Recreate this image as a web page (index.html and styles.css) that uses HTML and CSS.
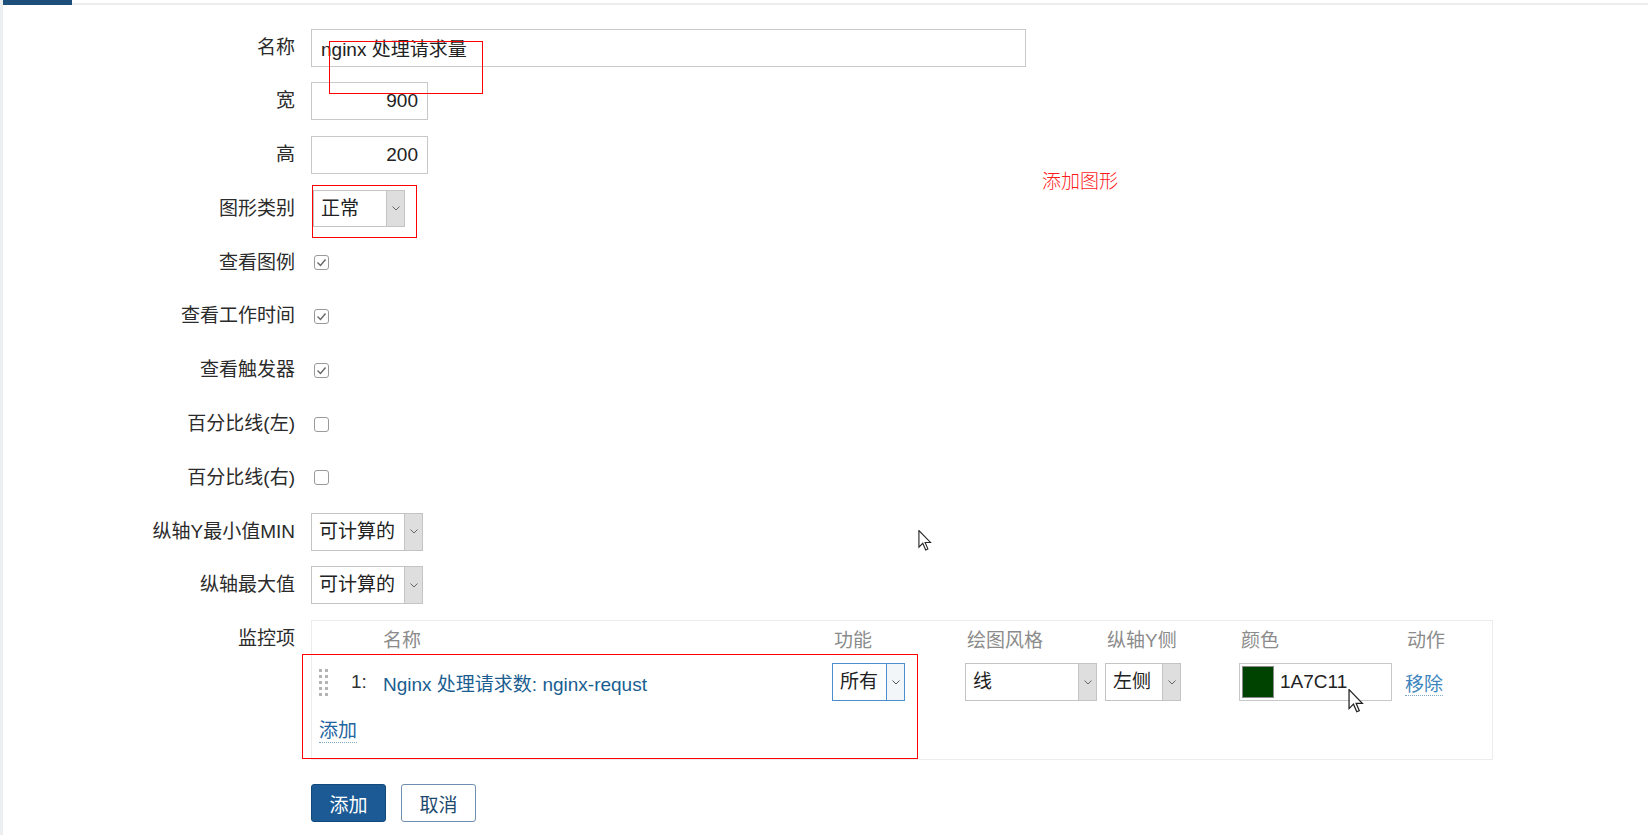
FILE: index.html
```html
<!DOCTYPE html>
<html>

	<head>
		<meta charset="utf-8">
		<title>图形</title>
		<link rel="stylesheet" href="styles.css">
	</head>

	<body>
		<div class="page">
			<div class="tabs">
				<div class="tab-on"></div>
				<div class="tab-line"></div>
			</div>

			<form class="graph-form">
				<label class="lbl">名称</label>
				<div class="fld"><input class="txt txt-name" type="text" value="nginx 处理请求量" /></div>

				<label class="lbl">宽</label>
				<div class="fld"><input class="txt txt-num" type="text" value="900" /></div>

				<label class="lbl">高</label>
				<div class="fld"><input class="txt txt-num" type="text" value="200" /></div>

				<label class="lbl">图形类别</label>
				<div class="fld">
					<div class="sel sel-type"><span class="sel-text">正常</span><span class="sel-btn"><svg width="8" height="5"><polyline points="0.5,0.5 4,4 7.5,0.5" fill="none" stroke="#666" /></svg></span></div>
				</div>

				<label class="lbl">查看图例</label>
				<div class="fld"><span class="chk"><svg width="15" height="15"><rect x="0.5" y="0.5" width="14" height="14" rx="2.5" fill="#fff" stroke="#9a9a9a" /><polyline points="3.5,7.5 6.5,10.5 11.5,4.5" fill="none" stroke="#666" stroke-width="1.4" /></svg></span></div>

				<label class="lbl">查看工作时间</label>
				<div class="fld"><span class="chk"><svg width="15" height="15"><rect x="0.5" y="0.5" width="14" height="14" rx="2.5" fill="#fff" stroke="#9a9a9a" /><polyline points="3.5,7.5 6.5,10.5 11.5,4.5" fill="none" stroke="#666" stroke-width="1.4" /></svg></span></div>

				<label class="lbl">查看触发器</label>
				<div class="fld"><span class="chk"><svg width="15" height="15"><rect x="0.5" y="0.5" width="14" height="14" rx="2.5" fill="#fff" stroke="#9a9a9a" /><polyline points="3.5,7.5 6.5,10.5 11.5,4.5" fill="none" stroke="#666" stroke-width="1.4" /></svg></span></div>

				<label class="lbl">百分比线(左)</label>
				<div class="fld"><span class="chk"><svg width="15" height="15"><rect x="0.5" y="0.5" width="14" height="14" rx="2.5" fill="#fff" stroke="#9a9a9a" /></svg></span></div>

				<label class="lbl">百分比线(右)</label>
				<div class="fld"><span class="chk"><svg width="15" height="15"><rect x="0.5" y="0.5" width="14" height="14" rx="2.5" fill="#fff" stroke="#9a9a9a" /></svg></span></div>

				<label class="lbl">纵轴Y最小值MIN</label>
				<div class="fld">
					<div class="sel sel-calc"><span class="sel-text">可计算的</span><span class="sel-btn"><svg width="8" height="5"><polyline points="0.5,0.5 4,4 7.5,0.5" fill="none" stroke="#666" /></svg></span></div>
				</div>

				<label class="lbl">纵轴最大值</label>
				<div class="fld">
					<div class="sel sel-calc"><span class="sel-text">可计算的</span><span class="sel-btn"><svg width="8" height="5"><polyline points="0.5,0.5 4,4 7.5,0.5" fill="none" stroke="#666" /></svg></span></div>
				</div>

				<label class="lbl lbl-top">监控项</label>
				<div class="items">
					<div class="items-grid">
						<span></span>
						<span></span>
						<span class="th th-name">名称</span>
						<span class="th">功能</span>
						<span class="th">绘图风格</span>
						<span class="th">纵轴Y侧</span>
						<span class="th">颜色</span>
						<span class="th">动作</span>

						<span class="drag"><svg width="9" height="27"><g fill="#b4b4b4"><rect x="0" y="0" width="3" height="3" /><rect x="6" y="0" width="3" height="3" /><rect x="0" y="6" width="3" height="3" /><rect x="6" y="6" width="3" height="3" /><rect x="0" y="12" width="3" height="3" /><rect x="6" y="12" width="3" height="3" /><rect x="0" y="18" width="3" height="3" /><rect x="6" y="18" width="3" height="3" /><rect x="0" y="24" width="3" height="3" /><rect x="6" y="24" width="3" height="3" /></g></svg></span>
						<span class="num">1:</span>
						<a class="item-link">Nginx 处理请求数: nginx-requst</a>
						<div class="sel sel-focus sel-fn"><span class="sel-text">所有</span><span class="sel-btn"><svg width="8" height="5"><polyline points="0.5,0.5 4,4 7.5,0.5" fill="none" stroke="#555" /></svg></span></div>
						<div class="sel sel-draw"><span class="sel-text">线</span><span class="sel-btn"><svg width="8" height="5"><polyline points="0.5,0.5 4,4 7.5,0.5" fill="none" stroke="#666" /></svg></span></div>
						<div class="sel sel-side"><span class="sel-text">左侧</span><span class="sel-btn"><svg width="8" height="5"><polyline points="0.5,0.5 4,4 7.5,0.5" fill="none" stroke="#666" /></svg></span></div>
						<div class="clr"><span class="swatch"></span><span class="clr-text">1A7C11</span></div>
						<span><a class="dot-link remove">移除</a></span>
					</div>
					<a class="dot-link add-item">添加</a>
				</div>

				<span></span>
				<div class="btns">
					<button type="button" class="btn btn-main">添加</button>
					<button type="button" class="btn btn-alt">取消</button>
				</div>
			</form>
		</div>

		<!-- annotations drawn over the screenshot -->
		<div class="mark mark-name"></div>
		<div class="mark mark-type"></div>
		<div class="mark mark-items"></div>
		<div class="note">添加图形</div>

		<svg class="cursor cursor-a" width="14" height="21" viewBox="0 0 12 19"><path d="M0.5,0.5 L0.5,15.5 L4,12 L6.6,18 L8.6,17.1 L6.1,11.3 L11,11.3 Z" fill="#fff" stroke="#222" stroke-width="1" /></svg>
		<svg class="cursor cursor-b" width="16" height="24" viewBox="0 0 12 19"><path d="M0.5,0.5 L0.5,15.5 L4,12 L6.6,18 L8.6,17.1 L6.1,11.3 L11,11.3 Z" fill="#fff" stroke="#222" stroke-width="1" /></svg>
	</body>

</html>
```

FILE: styles.css
```css
html,
body {
	margin: 0;
	background-color: #ffffff;
}

body {
	position: relative;
	font-family: "Liberation Sans", "Noto Sans CJK SC", sans-serif;
	font-size: 19px;
	color: #2b2b2b;
}

.page {
	box-sizing: border-box;
	min-height: 835px;
	border-left: 3px solid #eceef0;
}

.tabs {
	display: flex;
	align-items: flex-end;
	height: 5px;
}

.tab-on {
	width: 69px;
	height: 5px;
	background-color: #1d4f7a;
}

.tab-line {
	flex: 1;
	height: 2px;
	background-color: #ececec;
}

.graph-form {
	display: grid;
	grid-template-columns: 292px 1fr;
	column-gap: 16px;
	row-gap: 15.8px;
	padding-top: 23.5px;
}

.lbl {
	height: 38px;
	line-height: 38px;
	text-align: right;
	white-space: nowrap;
}

.lbl-top {
	align-self: start;
}

.fld {
	display: flex;
	align-items: center;
	height: 38px;
}

.txt {
	box-sizing: border-box;
	height: 38px;
	margin: 0;
	padding: 0 9px;
	border: 1px solid #c8c8c8;
	font: inherit;
	color: #222;
	outline: none;
}

.txt-name {
	width: 715px;
}

.txt-num {
	width: 117px;
	text-align: right;
}

.sel {
	box-sizing: border-box;
	display: flex;
	height: 38px;
	border: 1px solid #c4c4c4;
	background-color: #fff;
	color: #222;
}

.sel-text {
	flex: 1;
	padding-left: 7px;
	line-height: 36px;
	white-space: nowrap;
}

.sel-btn {
	display: flex;
	align-items: center;
	justify-content: center;
	width: 17px;
	border-left: 1px solid #c4c4c4;
	background-color: #dedede;
}

.sel-type {
	width: 92px;
	height: 37px;
	margin-left: 2px;
}

.sel-calc {
	width: 112px;
}

.sel-focus {
	border-color: #4d8fcc;
}

.sel-focus .sel-btn {
	border-left-color: #4d8fcc;
	background-color: #f3f6f9;
}

.sel-fn {
	width: 73px;
}

.sel-draw {
	width: 132px;
}

.sel-side {
	width: 76px;
}

.chk {
	display: flex;
	margin-left: 3px;
}

.items {
	box-sizing: border-box;
	width: 1182px;
	border: 1px solid #ececec;
	padding: 8px 0 16px 7px;
}

.items-grid {
	display: grid;
	grid-template-columns: 32px 32px 449px 133px 140px 134px 166px auto;
	grid-template-rows: 24px 40px;
	row-gap: 9px;
	align-items: center;
}

.th {
	padding-left: 2px;
	line-height: 24px;
	color: #8b8b8b;
}

.th-name {
	padding-left: 0;
}

.drag {
	display: flex;
}

.num {
	color: #333;
}

.item-link {
	color: #1a5e91;
	white-space: nowrap;
}

.clr {
	box-sizing: border-box;
	display: flex;
	align-items: center;
	width: 153px;
	height: 38px;
	border: 1px solid #c8c8c8;
}

.swatch {
	box-sizing: border-box;
	width: 32px;
	height: 32px;
	margin-left: 2px;
	border: 1px solid #8a8a8a;
	background-color: #004300;
}

.clr-text {
	margin-left: 6px;
	color: #222;
}

.dot-link {
	border-bottom: 1px dotted #7fa8c8;
	cursor: pointer;
}

.remove {
	color: #3d86bd;
}

.add-item {
	display: inline-block;
	margin-top: 17px;
	line-height: 23px;
	color: #1f65a0;
}

.btns {
	display: flex;
	gap: 15px;
	margin-top: 8px;
}

.btn {
	box-sizing: border-box;
	width: 75px;
	height: 38px;
	border-radius: 3px;
	font: inherit;
	cursor: pointer;
}

.btn-main {
	border: 1px solid #134a7c;
	background-color: #1b5a95;
	color: #fff;
}

.btn-alt {
	border: 1px solid #6e8faf;
	background-color: #fff;
	color: #1d4a6e;
}

.mark {
	position: absolute;
	box-sizing: border-box;
	border: 1px solid #ff0000;
}

.mark-name {
	left: 329px;
	top: 41px;
	width: 154px;
	height: 53px;
}

.mark-type {
	left: 312px;
	top: 185px;
	width: 105px;
	height: 53px;
}

.mark-items {
	left: 302px;
	top: 654px;
	width: 616px;
	height: 105px;
}

.note {
	position: absolute;
	left: 1042px;
	top: 168px;
	line-height: 24px;
	font-family: "Noto Sans CJK SC", sans-serif;
	font-weight: 300;
	color: #ff1a1a;
}

.cursor {
	position: absolute;
}

.cursor-a {
	left: 918px;
	top: 530px;
}

.cursor-b {
	left: 1348px;
	top: 689px;
}
```
